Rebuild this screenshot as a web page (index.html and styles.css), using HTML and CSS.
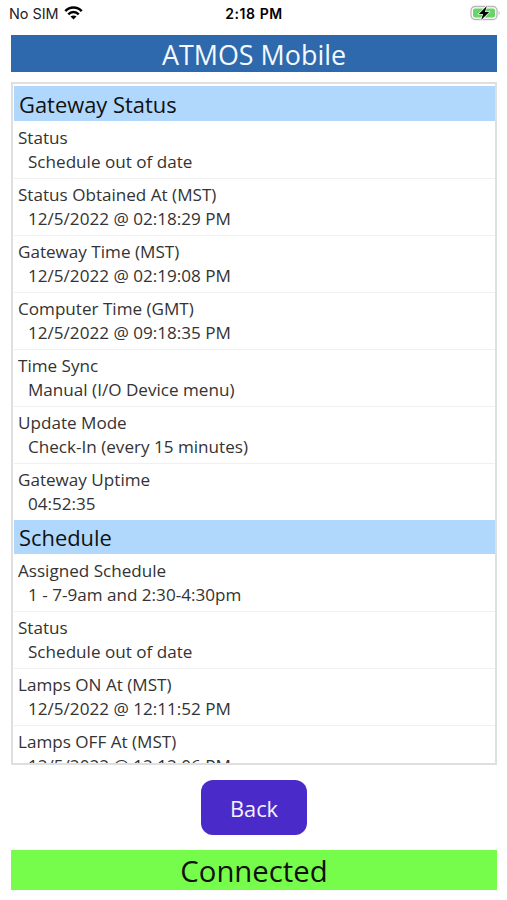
FILE: index.html
```html
<!DOCTYPE html>
<html lang="en">
<head>
<meta charset="utf-8">
<title>ATMOS Mobile</title>
<link rel="stylesheet" href="styles.css">
</head>
<body>
<div class="statusbar">
  <div class="carrier">
    <span>No SIM</span>
    <svg class="wifi" width="19" height="14" viewBox="0 0 18 14" fill="none" stroke="#000" stroke-width="2.5">
      <path d="M.8 5.1C5.3.2 12.7.2 17.2 5.1"/>
      <path d="M3.8 8.3C6.7 5.3 11.3 5.3 14.2 8.3"/>
      <path d="M9 13.6 6 10.6C7.7 9 10.3 9 12 10.6Z" fill="#000" stroke="none"/>
    </svg>
  </div>
  <div class="clock">2:18 PM</div>
  <svg class="battery" width="31" height="16" viewBox="0 0 31 16">
    <rect x="1" y="1.5" width="26" height="13" rx="4" fill="#fff" stroke="#b8b8b8" stroke-width="1.3"/>
    <rect x="3" y="3.5" width="22" height="9" rx="2" fill="#67d369"/>
    <path d="M28.6 5.8q2 2.2 0 4.4z" fill="#b4b4b4"/>
    <path d="M16.8 1 8.8 8.9h4.3L11.1 15 19.2 7.1h-4.3z" fill="#000" stroke="#fff" stroke-width="1.2" paint-order="stroke"/>
  </svg>
</div>
<h1 class="title">ATMOS Mobile</h1>
<div class="panel">
  <h2>Gateway Status</h2>
  <dl>
    <div class="row"><dt>Status</dt><dd>Schedule out of date</dd></div>
    <div class="row"><dt>Status Obtained At (MST)</dt><dd>12/5/2022 @ 02:18:29 PM</dd></div>
    <div class="row"><dt>Gateway Time (MST)</dt><dd>12/5/2022 @ 02:19:08 PM</dd></div>
    <div class="row"><dt>Computer Time (GMT)</dt><dd>12/5/2022 @ 09:18:35 PM</dd></div>
    <div class="row"><dt>Time Sync</dt><dd>Manual (I/O Device menu)</dd></div>
    <div class="row"><dt>Update Mode</dt><dd>Check-In (every 15 minutes)</dd></div>
    <div class="row"><dt>Gateway Uptime</dt><dd>04:52:35</dd></div>
  </dl>
  <h2 class="schedule">Schedule</h2>
  <dl>
    <div class="row"><dt>Assigned Schedule</dt><dd>1 - 7-9am and 2:30-4:30pm</dd></div>
    <div class="row"><dt>Status</dt><dd>Schedule out of date</dd></div>
    <div class="row"><dt>Lamps ON At (MST)</dt><dd>12/5/2022 @ 12:11:52 PM</dd></div>
    <div class="row"><dt>Lamps OFF At (MST)</dt><dd>12/5/2022 @ 12:12:06 PM</dd></div>
  </dl>
</div>
<button class="back" type="button">Back</button>
<div class="connection">Connected</div>
</body>
</html>
```
FILE: styles.css
```css
* { box-sizing: border-box; }
body {
  margin: 0;
  padding: 0 10px 10px 11px;
  height: 900px;
  display: flex;
  flex-direction: column;
  background: #fff;
  font-family: "Open Sans", sans-serif;
  color: #333;
  overflow: hidden;
}
.statusbar {
  height: 27px;
  margin: 0 -4px 8px -2px;
  display: grid;
  grid-template-columns: 1fr auto 1fr;
  align-items: center;
  font-family: Inter, sans-serif;
  color: #222;
  flex: none;
}
.carrier { display: flex; align-items: center; gap: 5px; font-size: 14.4px; }
.wifi { margin-top: -2px; }
.clock { font-size: 14px; font-weight: 600; letter-spacing: .6px; margin-left: -2px; color: #000; }
.battery { justify-self: end; margin-top: -1px; }
.title {
  margin: 0 0 10px;
  height: 37px;
  flex: none;
  background: #2d69ac;
  color: #f4f9ff;
  font-size: 26.9px;
  font-weight: 400;
  line-height: 39px;
  text-align: center;
}
.panel {
  height: 683px;
  flex: none;
  overflow: hidden;
  border: 2px solid #dfdfdf;
  padding: 2px 0 0 1px;
}
h2 {
  margin: 0;
  height: 35px;
  padding-left: 5px;
  background: #b0d8fd;
  color: #111;
  font-size: 21.9px;
  font-weight: 400;
  line-height: 37px;
}
.schedule { height: 34px; line-height: 36px; }
dl { margin: 0; }
.row {
  height: 57px;
  padding: 4px 0 0 4px;
  border-top: 1px solid #f0f0f0;
  font-size: 17.1px;
  line-height: 24px;
  white-space: nowrap;
}
.row:first-child { border-top-color: transparent; }
dd { margin: 0 0 0 10px; }
.back {
  width: 106px;
  height: 55px;
  margin: 15px auto;
  padding: 2px 0 0;
  flex: none;
  border: 0;
  border-radius: 12px;
  background: #4a2bc9;
  color: #f5f2ff;
  font: 21.8px "Open Sans", sans-serif;
}
.connection {
  height: 40px;
  flex: none;
  background: #76fd4b;
  color: #111;
  font-size: 29.3px;
  line-height: 42px;
  text-align: center;
}
```
